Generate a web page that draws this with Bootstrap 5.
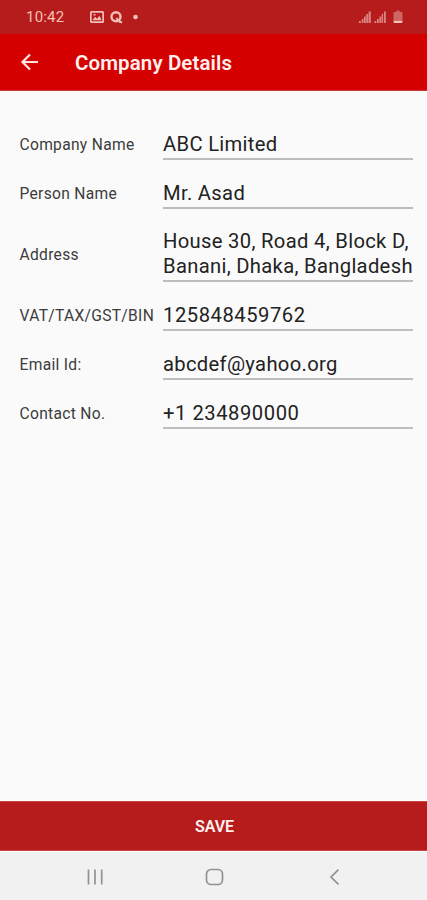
<!DOCTYPE html>
<html lang="en">
<head>
<meta charset="utf-8">
<meta name="viewport" content="width=device-width, initial-scale=1">
<title>Company Details</title>
<link href="https://cdn.jsdelivr.net/npm/bootstrap@5.3.0/dist/css/bootstrap.min.css" rel="stylesheet">
<style>
  body { font-family: Roboto, "Liberation Sans", sans-serif; background: #fafafa; color: #222; overflow: hidden; }
  .status-strip { height: 34px; background: #b71c1c; color: #f3c0b8; padding: 0 23px 0 26px; }
  .clock { font-size: 15px; letter-spacing: .2px; line-height: 34px; width: 64px; }
  .app-bar { height: 57px; background: #d50000; border-bottom: 1px solid #c93a3a; padding-left: 20px; }
  .app-title { font-size: 20.5px; font-weight: 600; letter-spacing: .1px; line-height: 56px; padding-top: 1px; margin-left: 36px; color: #fff0ee; }
  .details { padding: 29.3px 14px 0 19.5px; }
  .field-row { min-height: 49.1px; }
  .field-label { width: 143.5px; font-size: 15.6px; letter-spacing: .3px; padding-top: 1px; color: #3c3c3c; }
  .field-value { font-size: 20.2px; letter-spacing: .32px; line-height: 24.4px; padding: 11px 0 2px; margin-bottom: 9px; border-bottom: 2px solid #bdbdbd; }
  .digits { letter-spacing: .54px; }
  .save-btn { height: 50px; background: #b71c1c; color: #fff0ee; font-size: 16px; font-weight: 600; line-height: 1; border-top: 1px solid #c44; border-bottom: 1px solid #c44; }
  .save-btn span { display: inline-block; padding: 2px 0 0 2px; }
  .nav-strip { height: 49px; background: #f1f1f1; border-top: 1px solid #fafafa; padding-top: 2px; }
</style>
<script src="https://cdn.jsdelivr.net/npm/bootstrap@5.3.0/dist/js/bootstrap.bundle.min.js"></script>
</head>
<body class="vh-100 d-flex flex-column">
  <div class="status-strip d-flex align-items-center flex-shrink-0">
    <span class="clock">10:42</span>
    <svg width="50" height="16" viewBox="0 0 50 16" fill="none">
      <path fill="#f3c0b8" fill-rule="evenodd" d="M1.500 2h11a1.500 1.500 0 0 1 1.500 1.500v9a1.500 1.500 0 0 1-1.500 1.500h-11a1.500 1.500 0 0 1-1.500-1.500v-9a1.500 1.500 0 0 1 1.500-1.500zM1.700 3.700v8.600h10.600V3.700zM2.500 11.300l2.500-3.600 2 2 2.500-3 2 4.600zM3.500 5h2v1.500h-2z"/>
      <circle cx="26" cy="7.800" r="4.500" stroke="#f3c0b8" stroke-width="2.400"/>
      <path d="M26.500 9l2.500 3.300 3 1.200" stroke="#f3c0b8" stroke-width="2"/>
      <circle cx="45.500" cy="8" r="2.300" fill="#f3c0b8"/>
    </svg>
    <svg class="ms-auto" width="46" height="16" viewBox="0 0 46 16">
      <g fill="#d98480">
        <path d="M1 12h1.800v2H1zM3.700 10h1.800v4H3.700zM6 7.500h1.800V14H6zM8.300 5h1.800v9H8.300zM10.600 2.500h2.200V14h-2.200z"/>
        <path d="M16.500 12h1.800v2h-1.800zM19 10h1.800v4H19zM21.400 7.500h1.800V14h-1.800zM23.700 5h1.400v9h-1.400zM26 2.500h1.800V14H26z"/>
        <path d="M38.500 1.500h3V3h2a1 1 0 0 1 1 1v7h-9V4a1 1 0 0 1 1-1h2z" opacity=".72"/>
      </g>
      <path fill="#f3c0b8" d="M35.500 11.500h9v1.500a1 1 0 0 1-1 1h-7a1 1 0 0 1-1-1z"/>
    </svg>
  </div>
  <header class="app-bar d-flex align-items-center flex-shrink-0">
    <svg width="19" height="18" viewBox="0 0 19 18" fill="none" stroke="#ffe5e2" stroke-width="2.200"><path d="M18 9H3M10 1.500L2.500 9l7.500 7.500"/></svg>
    <h1 class="app-title mb-0">Company Details</h1>
  </header>
  <main class="details flex-grow-1">
    <div class="field-row d-flex align-items-center"><div class="field-label flex-shrink-0">Company Name</div><div class="field-value flex-grow-1">ABC Limited</div></div>
    <div class="field-row d-flex align-items-center"><div class="field-label flex-shrink-0">Person Name</div><div class="field-value flex-grow-1">Mr. Asad</div></div>
    <div class="field-row d-flex align-items-center"><div class="field-label flex-shrink-0">Address</div><div class="field-value flex-grow-1 text-nowrap">House 30, Road 4, Block D,<br>Banani, Dhaka, Bangladesh</div></div>
    <div class="field-row d-flex align-items-center"><div class="field-label flex-shrink-0">VAT/TAX/GST/BIN</div><div class="field-value digits flex-grow-1">125848459762</div></div>
    <div class="field-row d-flex align-items-center"><div class="field-label flex-shrink-0">Email Id:</div><div class="field-value flex-grow-1">abcdef@yahoo.org</div></div>
    <div class="field-row d-flex align-items-center"><div class="field-label flex-shrink-0">Contact No.</div><div class="field-value digits flex-grow-1">+1 234890000</div></div>
  </main>
  <button type="button" class="save-btn btn rounded-0 border-start-0 border-end-0 w-100 p-0 flex-shrink-0"><span>SAVE</span></button>
  <nav class="nav-strip d-flex align-items-center justify-content-center flex-shrink-0">
    <svg width="253" height="20" viewBox="0 0 253 20" fill="none" stroke="#929292" stroke-width="1.700">
      <path d="M1.500 2.500v15M8 2.500v15M14.700 2.500v15"/>
      <rect x="119.500" y="2.500" width="16" height="15" rx="4.500"/>
      <path d="M251.500 2.700L244 10l7.500 7.300"/>
    </svg>
  </nav>
</body>
</html>
